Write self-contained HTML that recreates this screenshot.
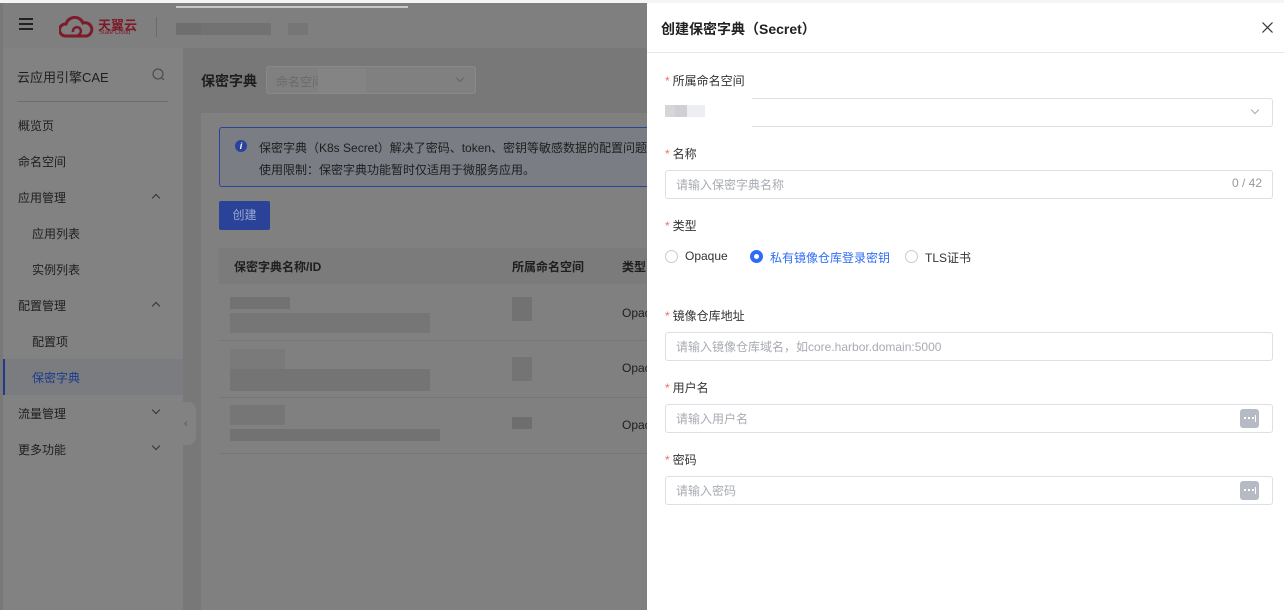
<!DOCTYPE html>
<html><head><meta charset="utf-8"><style>
*{box-sizing:border-box;margin:0;padding:0}
body{width:1284px;height:610px;overflow:hidden;position:relative;font-family:"Liberation Sans","Noto Sans CJK SC",sans-serif;font-size:12px;background:#787878;color:#222}
.abs{position:absolute}
.top{left:0;top:0;width:1284px;height:3px;background:#f5f5f5}
.strip{left:0;top:3px;width:3px;height:607px;background:#3c414c}
.header{left:3px;top:3px;width:644px;height:45px;background:#7f7f7f}
.side{left:3px;top:48px;width:180px;height:562px;background:#828282}
.mi{position:absolute;left:15px;font-size:12px;color:#1e1e1e}
.sub{left:29px}
.chev{position:absolute;left:150px;width:6px;height:6px;border-left:1px solid #333;border-top:1px solid #333}
.blk{position:absolute;background:#6e6e6e}
.lbl{position:absolute;left:665px;font-size:12px;color:#333}
.lbl b{color:#f56c6c;font-weight:normal;margin-right:3px}
.inp{position:absolute;left:665px;width:608px;height:29px;border:1px solid #dcdfe6;border-radius:3px;background:#fff;font-size:12px;color:#a8abb2;padding:5px 0 0 10px}
.pw{position:absolute;right:13px;top:4px;width:19px;height:19px;background:#b6bac4;border-radius:3px}
.pw i{position:absolute;top:8px;width:2px;height:2px;background:#fff}
.radio{position:absolute;top:250px;width:13px;height:13px;border:1px solid #c8cbd2;border-radius:50%;background:#fff}
.rt{position:absolute;top:249px;font-size:12px;color:#333}
</style></head><body>
<div class="abs top"></div>
<div class="abs header">
  <div class="abs" style="left:16px;top:15px;width:14px;height:2px;background:#222;box-shadow:0 5px 0 #222,0 10px 0 #222"></div>
  <svg class="abs" style="left:56px;top:13px" width="36" height="24" viewBox="0 0 36 24"><path d="M6 20 A6 6 0 0 1 7 8 A9 9 0 0 1 24 7 A6.5 6.5 0 0 1 28 20 Z" fill="none" stroke="#7d1b2a" stroke-width="3"/><path d="M14 16 a4 4 0 1 1 5 3" fill="none" stroke="#7d1b2a" stroke-width="2.5"/></svg>
  <div class="abs" style="left:95px;top:12px;font-size:13px;font-weight:bold;color:#7d1b2a">天翼云</div>
  <div class="abs" style="left:96px;top:27px;font-size:6px;color:#7d1b2a">State Cloud</div>
  <div class="abs" style="left:153px;top:14px;width:1px;height:20px;background:#6a6a6a"></div>
  <div class="blk" style="left:173px;top:20px;width:30px;height:12px"></div>
  <div class="blk" style="left:198px;top:20px;width:70px;height:12px;background:#727272"></div>
  <div class="blk" style="left:285px;top:20px;width:20px;height:12px;background:#767676"></div>
</div>
<div class="abs" style="left:176px;top:6px;width:232px;height:2px;background:#c8c8c8"></div>
<div class="abs side">
  <div class="abs" style="left:14px;top:19px;font-size:13px;color:#1e1e1e">云应用引擎CAE</div>
  <svg class="abs" style="left:149px;top:20px" width="13" height="13" viewBox="0 0 13 13"><circle cx="6" cy="6" r="5" fill="none" stroke="#444"/><path d="M10 10l2 2" stroke="#444"/></svg>
  <div class="abs" style="left:14px;top:53px;width:151px;height:1px;background:#6c6c6c"></div>
  <div class="mi" style="top:69px">概览页</div>
  <div class="mi" style="top:105px">命名空间</div>
  <div class="mi" style="top:141px">应用管理</div><div class="chev" style="top:147px;transform:rotate(45deg)"></div>
  <div class="mi sub" style="top:177px">应用列表</div>
  <div class="mi sub" style="top:213px">实例列表</div>
  <div class="mi" style="top:249px">配置管理</div><div class="chev" style="top:255px;transform:rotate(45deg)"></div>
  <div class="mi sub" style="top:285px">配置项</div>
  <div class="abs" style="left:0;top:311px;width:180px;height:36px;background:#7a7c80"></div>
  <div class="abs" style="left:0;top:311px;width:2px;height:36px;background:#1d3a8c"></div>
  <div class="mi sub" style="top:321px;color:#1d3a8c">保密字典</div>
  <div class="mi" style="top:357px">流量管理</div><div class="chev" style="top:359px;transform:rotate(225deg)"></div>
  <div class="mi" style="top:393px">更多功能</div><div class="chev" style="top:395px;transform:rotate(225deg)"></div>
</div>
<div class="abs" style="left:183px;top:402px;width:13px;height:43px;background:#828282;border-radius:0 8px 8px 0"></div>
<div class="abs" style="top:418px;font-size:11px;color:#555;left:184px">‹</div>
<div class="abs" style="left:201px;top:71px;font-size:14px;font-weight:bold;color:#1e1e1e">保密字典</div>
<div class="abs" style="left:266px;top:66px;width:210px;height:28px;border:1px solid #8a8a8a;border-radius:3px;background:#808080"></div>
<div class="abs" style="left:276px;top:73px;color:#6a6a6a">命名空间</div>
<div class="abs" style="left:318px;top:69px;width:48px;height:24px;background:#848484"></div>
<div class="abs" style="left:457px;top:75px;width:6px;height:6px;border-right:1px solid #666;border-bottom:1px solid #666;transform:rotate(45deg)"></div>
<div class="abs" style="left:201px;top:113px;width:446px;height:497px;background:#808080"></div>
<div class="abs" style="left:219px;top:127px;width:428px;height:60px;border:1px solid #2a4399;border-right:none;border-radius:3px 0 0 3px;background:#7a7d84"></div>
<div class="abs" style="left:235px;top:140px;width:12px;height:12px;border-radius:50%;background:#2a4399;color:#fff;font-size:9px;text-align:center;line-height:12px;font-style:italic;font-weight:bold">i</div>
<div class="abs" style="left:259px;top:139px;color:#1e1e1e;white-space:nowrap;width:388px;overflow:hidden">保密字典（K8s Secret）解决了密码、token、密钥等敏感数据的配置问题，不需要</div>
<div class="abs" style="left:259px;top:161px;color:#1e1e1e">使用限制：保密字典功能暂时仅适用于微服务应用。</div>
<div class="abs" style="left:219px;top:201px;width:51px;height:29px;background:#2a4399;border-radius:2px;color:#9aa8d0;text-align:center;line-height:29px">创建</div>
<div class="abs" style="left:219px;top:248px;width:428px;height:36px;background:#7b7b7b"></div>
<div class="abs" style="left:234px;top:258px;color:#1e1e1e;font-weight:bold">保密字典名称/ID</div>
<div class="abs" style="left:512px;top:258px;color:#1e1e1e;font-weight:bold">所属命名空间</div>
<div class="abs" style="left:622px;top:258px;color:#1e1e1e;font-weight:bold">类型</div>
<div class="abs" style="left:219px;top:340px;width:428px;height:1px;background:#767676"></div>
<div class="abs" style="left:219px;top:397px;width:428px;height:1px;background:#767676"></div>
<div class="abs" style="left:219px;top:453px;width:428px;height:1px;background:#767676"></div>
<div class="blk" style="left:230px;top:297px;width:60px;height:12px;background:#727272"></div>
<div class="blk" style="left:230px;top:313px;width:200px;height:20px;background:#767676"></div>
<div class="blk" style="left:230px;top:349px;width:55px;height:20px;background:#7a7a7a"></div>
<div class="blk" style="left:230px;top:369px;width:200px;height:22px;background:#747474"></div>
<div class="blk" style="left:230px;top:405px;width:55px;height:20px;background:#767676"></div>
<div class="blk" style="left:230px;top:429px;width:210px;height:12px;background:#727272"></div>
<div class="blk" style="left:512px;top:297px;width:20px;height:24px;background:#727272"></div>
<div class="blk" style="left:512px;top:357px;width:20px;height:24px;background:#747474"></div>
<div class="blk" style="left:512px;top:417px;width:20px;height:12px"></div>
<div class="abs" style="left:622px;top:306px;color:#1e1e1e">Opac</div>
<div class="abs" style="left:622px;top:361px;color:#1e1e1e">Opac</div>
<div class="abs" style="left:622px;top:418px;color:#1e1e1e">Opac</div>

<div class="abs" style="left:647px;top:3px;width:637px;height:607px;background:#fff"></div>
<div class="abs" style="left:661px;top:19px;font-size:14px;font-weight:bold;color:#222">创建保密字典（Secret）</div>
<svg class="abs" style="left:1262px;top:22px" width="11" height="11" viewBox="0 0 11 11"><path d="M0.5 0.5L10.5 10.5M10.5 0.5L0.5 10.5" stroke="#333" stroke-width="1.2"/></svg>
<div class="abs" style="left:647px;top:52px;width:637px;height:1px;background:#e4e7ed"></div>
<div class="lbl" style="top:72px"><b>*</b>所属命名空间</div>
<div class="inp" style="top:98px"></div>
<div class="abs" style="left:656px;top:95px;width:96px;height:34px;background:#fff"></div>
<div class="abs" style="left:665px;top:105px;width:40px;height:12px;background:#eceef1"></div>
<div class="abs" style="left:665px;top:105px;width:10px;height:12px;background:#d8d6d4"></div>
<div class="abs" style="left:675px;top:105px;width:12px;height:12px;background:#cfd0d3"></div>
<div class="abs" style="left:1252px;top:107px;width:6px;height:6px;border-right:1px solid #aaa;border-bottom:1px solid #aaa;transform:rotate(45deg)"></div>
<div class="lbl" style="top:145px"><b>*</b>名称</div>
<div class="inp" style="top:170px">请输入保密字典名称<span style="position:absolute;right:10px;top:5px;color:#999">0 / 42</span></div>
<div class="lbl" style="top:217px"><b>*</b>类型</div>
<div class="radio" style="left:665px"></div><div class="rt" style="left:685px">Opaque</div>
<div class="radio" style="left:750px;border:4px solid #2f6cf6"></div><div class="rt" style="left:770px;color:#2f6cf6">私有镜像仓库登录密钥</div>
<div class="radio" style="left:905px"></div><div class="rt" style="left:925px">TLS证书</div>
<div class="lbl" style="top:307px"><b>*</b>镜像仓库地址</div>
<div class="inp" style="top:332px">请输入镜像仓库域名，如core.harbor.domain:5000</div>
<div class="lbl" style="top:379px"><b>*</b>用户名</div>
<div class="inp" style="top:404px">请输入用户名<div class="pw"><i style="left:4px"></i><i style="left:8px"></i><i style="left:12px"></i><i style="left:15px;top:6px;width:1px;height:7px"></i></div></div>
<div class="lbl" style="top:451px"><b>*</b>密码</div>
<div class="inp" style="top:476px">请输入密码<div class="pw"><i style="left:4px"></i><i style="left:8px"></i><i style="left:12px"></i><i style="left:15px;top:6px;width:1px;height:7px"></i></div></div>
</body></html>
